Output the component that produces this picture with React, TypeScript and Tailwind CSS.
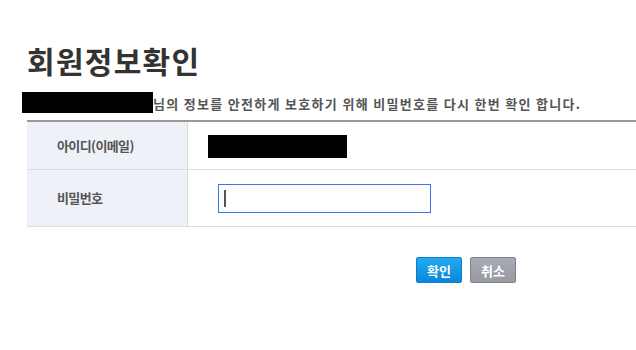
import React from "react";

export default function App() {
  return (
    <div
      className="w-[636px] h-[350px] overflow-hidden bg-white relative"
      style={{ fontFamily: '"Noto Sans CJK KR", "Noto Sans", sans-serif' }}
    >
      <div className="w-[900px]">
        <h1 className="pl-[27px] pt-[40px] text-[30px] leading-[40px] font-bold text-[#333] tracking-[1.3px]">
          회원정보확인
        </h1>
        <div className="flex items-center mt-[12px] pl-[22px] h-[21px]">
          <div className="w-[131px] h-[21px] bg-black" />
          <span className="text-[13px] font-bold text-[#555] tracking-[1.3px] leading-[21px] pt-[2px]">
            님의 정보를 안전하게 보호하기 위해 비밀번호를 다시 한번 확인 합니다.
          </span>
        </div>
        <div className="ml-[27px] mt-[7px] w-[878px] border-t-2 border-[#999]">
          <div className="flex h-[48px] border-b border-[#ddd]">
            <div className="w-[161px] bg-[#eef1f8] border-r border-[#ddd] flex items-center pl-[30px] text-[13px] font-bold text-[#555] tracking-[-0.6px]">
              아이디(이메일)
            </div>
            <div className="flex items-center pl-[20px] pt-[2px]">
              <div className="w-[139px] h-[23px] bg-black" />
            </div>
          </div>
          <div className="flex h-[57px] border-b border-[#ddd]">
            <div className="w-[161px] bg-[#eef1f8] border-r border-[#ddd] flex items-center pl-[30px] text-[13px] font-bold text-[#555] tracking-[-0.6px]">
              비밀번호
            </div>
            <div className="flex items-center pl-[30px]">
              <div className="w-[213px] h-[29px] border border-[#3b74f4] flex items-center pl-[5px]">
                <div className="w-[2px] h-[17px] bg-[#555]" />
              </div>
            </div>
          </div>
        </div>
        <div className="ml-[27px] w-[878px] flex justify-center gap-[8px] mt-[30px]">
          <button className="w-[46px] h-[26px] rounded-[2px] border border-[#0b7fcd] bg-gradient-to-b from-[#22aaf2] to-[#0b86d9] text-white text-[13px] font-bold leading-none">
            확인
          </button>
          <button className="w-[46px] h-[26px] rounded-[2px] border border-[#80828b] bg-gradient-to-b from-[#a9abb4] to-[#979aa3] text-white text-[13px] font-bold leading-none">
            취소
          </button>
        </div>
      </div>
    </div>
  );
}
